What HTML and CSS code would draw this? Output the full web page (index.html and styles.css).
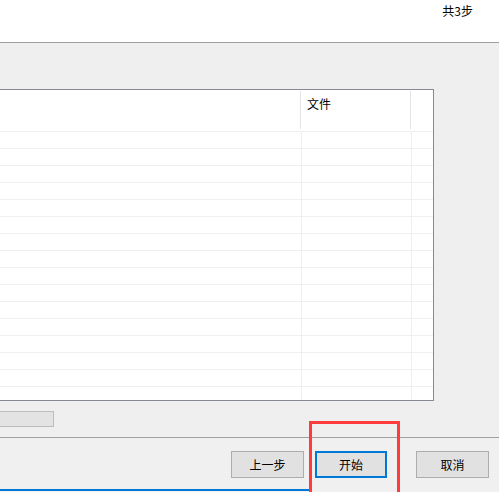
FILE: index.html
```html
<!DOCTYPE html>
<html lang="zh">
<head>
<meta charset="utf-8">
<title>向导</title>
<link rel="stylesheet" href="styles.css">
</head>
<body>
<div class="page">
  <header class="top">
    <span class="steps">共3步</span>
  </header>
  <main class="main">
    <div class="table">
      <div class="thead">
        <div class="th th-first"></div>
        <div class="divider"></div>
        <div class="th th-file">文件</div>
        <div class="divider"></div>
        <div class="th th-last"></div>
      </div>
      <div class="tbody">
        <div class="row"><div class="c1"></div><div class="c2"></div><div class="c3"></div></div>
        <div class="row"><div class="c1"></div><div class="c2"></div><div class="c3"></div></div>
        <div class="row"><div class="c1"></div><div class="c2"></div><div class="c3"></div></div>
        <div class="row"><div class="c1"></div><div class="c2"></div><div class="c3"></div></div>
        <div class="row"><div class="c1"></div><div class="c2"></div><div class="c3"></div></div>
        <div class="row"><div class="c1"></div><div class="c2"></div><div class="c3"></div></div>
        <div class="row"><div class="c1"></div><div class="c2"></div><div class="c3"></div></div>
        <div class="row"><div class="c1"></div><div class="c2"></div><div class="c3"></div></div>
        <div class="row"><div class="c1"></div><div class="c2"></div><div class="c3"></div></div>
        <div class="row"><div class="c1"></div><div class="c2"></div><div class="c3"></div></div>
        <div class="row"><div class="c1"></div><div class="c2"></div><div class="c3"></div></div>
        <div class="row"><div class="c1"></div><div class="c2"></div><div class="c3"></div></div>
        <div class="row"><div class="c1"></div><div class="c2"></div><div class="c3"></div></div>
        <div class="row"><div class="c1"></div><div class="c2"></div><div class="c3"></div></div>
        <div class="row"><div class="c1"></div><div class="c2"></div><div class="c3"></div></div>
        <div class="row"><div class="c1"></div><div class="c2"></div><div class="c3"></div></div>
      </div>
    </div>
    <div class="hscroll"></div>
  </main>
  <footer class="footer">
    <div class="buttons">
      <button class="btn">上一步</button>
      <button class="btn btn-primary">开始</button>
      <button class="btn btn-cancel">取消</button>
    </div>
    <div class="progress"></div>
    <div class="highlight"></div>
  </footer>
</div>
</body>
</html>
```

FILE: styles.css
```css
html, body {
  margin: 0;
  padding: 0;
}
body {
  width: 499px;
  height: 492px;
  overflow: hidden;
  background: #f0f0f0;
  font-family: "Noto Sans CJK SC", "Microsoft YaHei", sans-serif;
  font-size: 12px;
  color: #000;
}
.page {
  display: flex;
  flex-direction: column;
  height: 492px;
}
.top {
  height: 42px;
  background: #ffffff;
  border-bottom: 1px solid #a0a0a0;
  display: flex;
  justify-content: flex-end;
  box-sizing: content-box;
}
.steps {
  margin-right: 26px;
  padding-top: 2px;
  line-height: 17px;
}
.main {
  height: 394px;
  padding-top: 46px;
  box-sizing: border-box;
  background: #efefef;
  display: flex;
  flex-direction: column;
}
.table {
  width: 434px;
  height: 312px;
  box-sizing: border-box;
  border-top: 1px solid #868a91;
  border-bottom: 1px solid #868a91;
  border-right: 1px solid #868a91;
  background: #ffffff;
  overflow: hidden;
  display: flex;
  flex-direction: column;
}
.thead {
  height: 41px;
  flex: none;
  display: flex;
  padding: 1px 0 2px;
  box-sizing: border-box;
}
.th-first { width: 300px; }
.divider {
  width: 1px;
  background: #e5e5e5;
}
.th-file {
  width: 109px;
  padding: 4px 0 0 6px;
  box-sizing: border-box;
  line-height: 17px;
}
.th-last { flex: 1; }
.tbody {
  display: flex;
  flex-direction: column;
}
.row {
  height: 17px;
  flex: none;
  box-sizing: border-box;
  border-top: 1px solid #efefef;
  display: flex;
}
.c1 {
  width: 302px;
  border-right: 1px solid #efefef;
  box-sizing: border-box;
}
.c2 {
  width: 110px;
  border-right: 1px solid #efefef;
  box-sizing: border-box;
}
.c3 { flex: 1; }
.hscroll {
  margin-top: 10px;
  width: 54px;
  height: 16px;
  box-sizing: border-box;
  background: #e3e3e3;
  border: 1px solid #bcbcbc;
  border-left: none;
}
.footer {
  position: relative;
  flex: 1;
  border-top: 1px solid #a0a0a0;
  background: #f0f0f0;
  display: flex;
  flex-direction: column;
}
.buttons {
  display: flex;
  justify-content: flex-end;
  gap: 11px;
  padding: 13px 10px 0 0;
}
.btn {
  width: 73px;
  height: 27px;
  box-sizing: border-box;
  margin: 0;
  padding: 0;
  background: #e1e1e1;
  border: 1px solid #adadad;
  font-family: "Noto Sans CJK SC", "Microsoft YaHei", sans-serif;
  font-size: 12px;
  color: #000;
  line-height: 17px;
}
.btn-primary {
  width: 72px;
  border: 2px solid #0078d7;
}
.btn-cancel {
  margin-left: 18px;
}
.progress {
  margin-top: 11px;
  width: 309px;
  height: 2px;
  background: #0078d7;
}
.highlight {
  position: absolute;
  left: 309px;
  top: -17px;
  width: 91px;
  height: 80px;
  box-sizing: border-box;
  border: 3px solid #ff3c3c;
  pointer-events: none;
}
```
